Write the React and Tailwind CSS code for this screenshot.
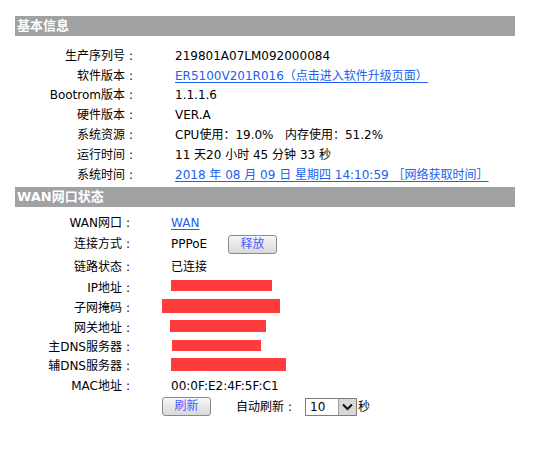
import React from 'react';

const basicRows = [
  { label: '生产序列号', value: '219801A07LM092000084' },
  { label: '软件版本', value: 'ER5100V201R016（点击进入软件升级页面）', link: true },
  { label: 'Bootrom版本', value: '1.1.1.6' },
  { label: '硬件版本', value: 'VER.A' },
  { label: '系统资源', value: 'CPU使用：19.0%\u00a0\u00a0\u00a0内存使用：51.2%' },
  { label: '运行时间', value: '11 天20 小时 45 分钟 33 秒' },
  { label: '系统时间', value: '2018 年 08 月 09 日 星期四 14:10:59 ［网络获取时间］', link: true },
];

const SectionHeader = ({ title }) => (
  <div className="w-[500px] h-5 bg-[#a0a2a4] text-white font-bold text-[13px] leading-5 pl-[2px]">
    {title}
  </div>
);

// label text right-aligned, then a centred colon in a 12px box
const Label = ({ children, w }) => (
  <div className="flex shrink-0">
    <div className={`${w} text-right whitespace-nowrap`}>{children}</div>
    <div className="w-3 text-center">:</div>
  </div>
);

const GrayButton = ({ children }) => (
  <button className="w-[49px] h-[19px] rounded-[3px] border border-[#8a8a8a] bg-gradient-to-b from-[#f7f7f7] to-[#d9d9d9] text-[#4a5cff] text-[12px] leading-[17px]">
    {children}
  </button>
);

const Redacted = ({ w, h }) => <div className={`${w} ${h} mb-1 bg-[#ff3b3b]`} />;

const WanRow = ({ label, h = 'h-5', pl = 'pl-[37px]', children }) => (
  <div className={`flex items-center ${h}`}>
    <Label w="w-[107px]">{label}</Label>
    <div className={`${pl} flex items-center whitespace-nowrap`}>{children}</div>
  </div>
);

export default function App() {
  return (
    <div className="w-[545px] h-[461px] bg-white pt-4 pl-[15px] text-[12px] text-black font-['DejaVu_Sans','Noto_Sans_CJK_SC',sans-serif]">
      <SectionHeader title="基本信息" />
      <div className="pt-[10px] pb-[2px]">
        {basicRows.map((r) => (
          <div key={r.label} className="flex items-center h-[19.8px]">
            <Label w="w-[110px]">{r.label}</Label>
            <div className="pl-[38px] whitespace-nowrap">
              {r.link ? (
                <a href="#" className="text-[#2060f0] underline underline-offset-2">{r.value}</a>
              ) : (
                r.value
              )}
            </div>
          </div>
        ))}
      </div>

      <SectionHeader title="WAN网口状态" />
      <div className="pt-[6px]">
        <WanRow label="WAN网口">
          <a href="#" className="text-[#2060f0] underline underline-offset-2">WAN</a>
        </WanRow>
        <WanRow label="连接方式" h="h-[23px]">
          <span className="w-[57px]">PPPoE</span>
          <GrayButton>释放</GrayButton>
        </WanRow>
        <WanRow label="链路状态" h="h-[22px]">已连接</WanRow>
        <WanRow label="IP地址">
          <Redacted w="w-[101px]" h="h-[11px]" />
        </WanRow>
        <WanRow label="子网掩码" pl="pl-[28px]">
          <Redacted w="w-[118px]" h="h-[14px]" />
        </WanRow>
        <WanRow label="网关地址" pl="pl-[36px]">
          <Redacted w="w-[96px]" h="h-[12px]" />
        </WanRow>
        <WanRow label="主DNS服务器" h="h-[19px]" pl="pl-[38px]">
          <Redacted w="w-[89px]" h="h-[11px]" />
        </WanRow>
        <WanRow label="辅DNS服务器" h="h-[19px]">
          <Redacted w="w-[115px]" h="h-[13px]" />
        </WanRow>
        <WanRow label="MAC地址">00:0F:E2:4F:5F:C1</WanRow>
        <div className="flex items-center h-[22px] pl-[147px]">
          <GrayButton>刷新</GrayButton>
          <span className="ml-[25px]">自动刷新</span>
          <span className="w-3 text-center">:</span>
          <div className="ml-[9px] flex items-center w-[52px] h-[18px] border border-[#7d7d7d] bg-white">
            <span className="flex-1 pl-[4px] leading-4">10</span>
            <div className="w-[18px] h-4 bg-[#d8d8d8] border-l border-[#a0a0a0] flex items-center justify-center">
              <svg width="11" height="8" viewBox="0 0 11 8">
                <path d="M1 1.5 L5.5 6 L10 1.5" fill="none" stroke="#111" strokeWidth="2" />
              </svg>
            </div>
          </div>
          <span className="ml-[1px]">秒</span>
        </div>
      </div>
    </div>
  );
}
